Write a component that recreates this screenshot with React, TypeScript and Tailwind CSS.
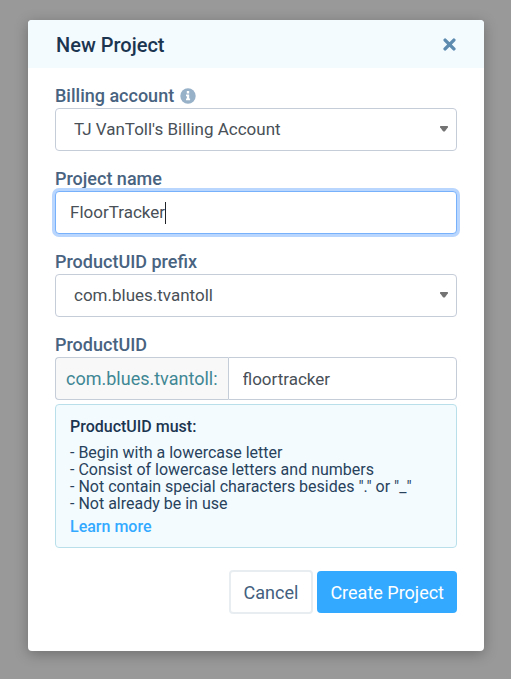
import { useState } from "react";
import type { ReactNode } from "react";

const control =
  "h-[43px] w-full rounded border border-[#c5cdd9] bg-white text-[17px] text-[#495057] outline-none";

function Label({ htmlFor, children }: { htmlFor: string; children: ReactNode }) {
  return (
    <label htmlFor={htmlFor} className="text-[18px] leading-6 font-medium text-[#48637f]">
      {children}
    </label>
  );
}

function Select({ id, value }: { id: string; value: string }) {
  return (
    <div className="relative">
      <select id={id} className={`${control} appearance-none pr-8 pl-[18px]`}>
        <option>{value}</option>
      </select>
      <svg
        className="pointer-events-none absolute top-[18px] right-[9px] h-[6px] w-2"
        viewBox="0 0 8 6"
        aria-hidden="true"
      >
        <path d="M.4 0h7.2q.5.2.3 1.2L5 5.2Q4 6 3 5.2L.1 1.2Q-.1.2.4 0Z" fill="#737373" />
      </svg>
    </div>
  );
}

export default function App() {
  const [name, setName] = useState("FloorTracker");
  const [uid, setUid] = useState("floortracker");

  return (
    <main className="min-h-screen bg-[#999] py-5 pr-[27px] pl-7 font-[Roboto,sans-serif]">
      <form
        role="dialog"
        aria-labelledby="title"
        onSubmit={(e) => e.preventDefault()}
        className="overflow-hidden rounded bg-white shadow-[0_3px_14px_rgba(0,0,0,0.28)]"
      >
        <header className="flex h-12 items-center justify-between bg-[#f3fbff] px-7">
          <h1 id="title" className="pt-0.5 text-[20px] leading-6 font-medium text-[#1b3550]">
            New Project
          </h1>
          <button type="button" aria-label="Close">
            <svg className="size-[13px]" viewBox="0 0 13 13" aria-hidden="true">
              <path
                d="M2.1 2.1 10.9 10.9M10.9 2.1 2.1 10.9"
                stroke="#5d8bb0"
                strokeWidth="3.4"
                strokeLinecap="round"
              />
            </svg>
          </button>
        </header>

        <div className="flex flex-col gap-4 px-[27px] pt-4 pb-[37px]">
          <div className="flex flex-col">
            <div className="flex items-center gap-1.5">
              <Label htmlFor="billing">Billing account</Label>
              <svg className="size-4" viewBox="0 0 16 16" role="img" aria-label="Information">
                <circle cx="8" cy="8" r="7.7" fill="#97b1c9" />
                <path d="M6.8 3.1h2.4v2.3H6.8zM6 6.6h3.2v4h.9v1.6H6v-1.6h.9V8.2H6z" fill="#fff" />
              </svg>
            </div>
            <Select id="billing" value="TJ VanToll's Billing Account" />
          </div>

          <div className="flex flex-col">
            <Label htmlFor="name">Project name</Label>
            <div className="flex h-[43px] items-center rounded border border-[#78b1fb] bg-white pl-3.5 shadow-[0_0_0_3px_#b9d6fe]">
              <input
                id="name"
                value={name}
                onChange={(e) => setName(e.target.value)}
                className="field-sizing-content text-[17px] text-[#495057] caret-transparent outline-none"
              />
              <span className="h-[22px] w-px bg-[#212529]" />
            </div>
          </div>

          <div className="flex flex-col">
            <Label htmlFor="prefix">ProductUID prefix</Label>
            <Select id="prefix" value="com.blues.tvantoll" />
          </div>

          <div className="flex flex-col">
            <Label htmlFor="uid">ProductUID</Label>
            <div className="flex">
              <span className="flex h-[43px] items-center rounded-l border border-r-0 border-[#c5cdd9] bg-[#f8f8f8] px-2.5 text-[18px] text-[#3f8794]">
                com.blues.tvantoll:
              </span>
              <input
                id="uid"
                value={uid}
                onChange={(e) => setUid(e.target.value)}
                className={`${control} min-w-0 flex-1 rounded-l-none px-3.5`}
              />
            </div>
            <section className="mt-1 rounded border border-[#b9e0ea] bg-[#f3fbff] px-3.5 pt-3 pb-2.5 text-[16px] text-[#28425c]">
              <h2 className="leading-5 font-medium text-[#1b3550]">ProductUID must:</h2>
              <ul className="mt-[7px] leading-[17px]">
                <li>- Begin with a lowercase letter</li>
                <li>- Consist of lowercase letters and numbers</li>
                <li>- Not contain special characters besides "." or "_"</li>
                <li>- Not already be in use</li>
              </ul>
              <a href="#" className="mt-[5px] block w-fit leading-5 font-medium text-[#33aaff]">
                Learn more
              </a>
            </section>
          </div>

          <footer className="mt-1.5 flex items-center justify-end gap-1">
            <button
              type="button"
              className="h-11 rounded border-2 border-[#e8edf1] px-[13px] text-[18px] text-[#43607e]"
            >
              Cancel
            </button>
            <button type="submit" className="h-[42px] rounded bg-[#33aaff] px-[13px] text-[18px] text-white">
              Create Project
            </button>
          </footer>
        </div>
      </form>
    </main>
  );
}
